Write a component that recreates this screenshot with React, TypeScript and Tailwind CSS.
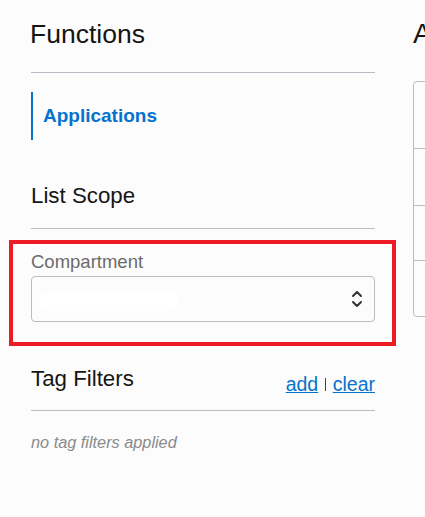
import React from "react";

const font = { fontFamily: '"Liberation Sans", Arial, sans-serif' };

function Chevrons() {
  return (
    <svg width="12" height="20" viewBox="0 0 12 20" fill="none" stroke="#333" strokeWidth="2" strokeLinecap="round" strokeLinejoin="round">
      <path d="M2 7 L6 3 L10 7" />
      <path d="M2 13 L6 17 L10 13" />
    </svg>
  );
}

export default function App() {
  return (
    <div style={font} className="flex w-[425px] h-[517px] overflow-hidden bg-[#fcfcfc] text-[#161513]">
      <aside className="w-[413px] shrink-0 pl-[31px] pr-[38px] pt-[19px] flex flex-col">
        <h1 className="text-[26.5px] leading-[30px] font-normal -ml-[1px]">Functions</h1>
        <div className="h-px bg-[#b9bcc4] mt-[23px]" />
        <nav className="mt-[19px]">
          <div className="h-[48px] leading-[48px] border-l-2 border-[#0572ce] pl-[10px] text-[19px] font-bold text-[#0572ce]">
            Applications
          </div>
        </nav>
        <h2 className="mt-[43px] text-[22.3px] leading-[26px] font-normal">List Scope</h2>
        <div className="h-px bg-[#b9bcc4] mt-[19px]" />
        <div className="mt-[11px] -ml-[22px] -mr-[21px] border-4 border-[#ed1c24] pl-[18px] pr-[17px] pt-[7px] pb-[20px]">
          <div className="text-[18.5px] leading-[22px] text-[#6b6b6b]">Compartment</div>
          <div className="mt-[3px] h-[46px] rounded-[4px] border border-[#b9bcc4] bg-[#fcfcfc] flex items-center justify-between pl-[8px] pr-[11px]">
            <div className="w-[138px] h-[19px] bg-white rounded-[6px] mt-[5px]" />
            <Chevrons />
          </div>
        </div>
        <div className="mt-[20px] flex justify-between items-start">
          <h2 className="text-[22.3px] leading-[26px] font-normal">Tag Filters</h2>
          <div className="pt-[7px] text-[19.5px] leading-[22px] flex items-baseline">
            <a className="text-[#0572ce] underline">add</a>
            <span className="inline-block w-[1.5px] h-[13px] bg-[#444] mx-[6.5px] self-end mb-[4px]" />
            <a className="text-[#0572ce] underline">clear</a>
          </div>
        </div>
        <div className="h-px bg-[#b9bcc4] mt-[15px]" />
        <p className="mt-[22px] text-[16.3px] leading-[18px] italic text-[#8a8a8a]">no tag filters applied</p>
      </aside>
      <main className="w-[400px] shrink-0 pt-[18px]">
        <h1 className="text-[28px] leading-[32px] font-normal whitespace-nowrap">Applications in compartment</h1>
        <div className="mt-[31px] border border-[#b9bcc4] rounded-[4px] bg-[#fcfcfc]">
          <div className="h-[67px] border-b border-[#b9bcc4]" />
          <div className="h-[57px] border-b border-[#b9bcc4]" />
          <div className="h-[55px] border-b border-[#b9bcc4]" />
          <div className="h-[55px]" />
        </div>
      </main>
    </div>
  );
}
